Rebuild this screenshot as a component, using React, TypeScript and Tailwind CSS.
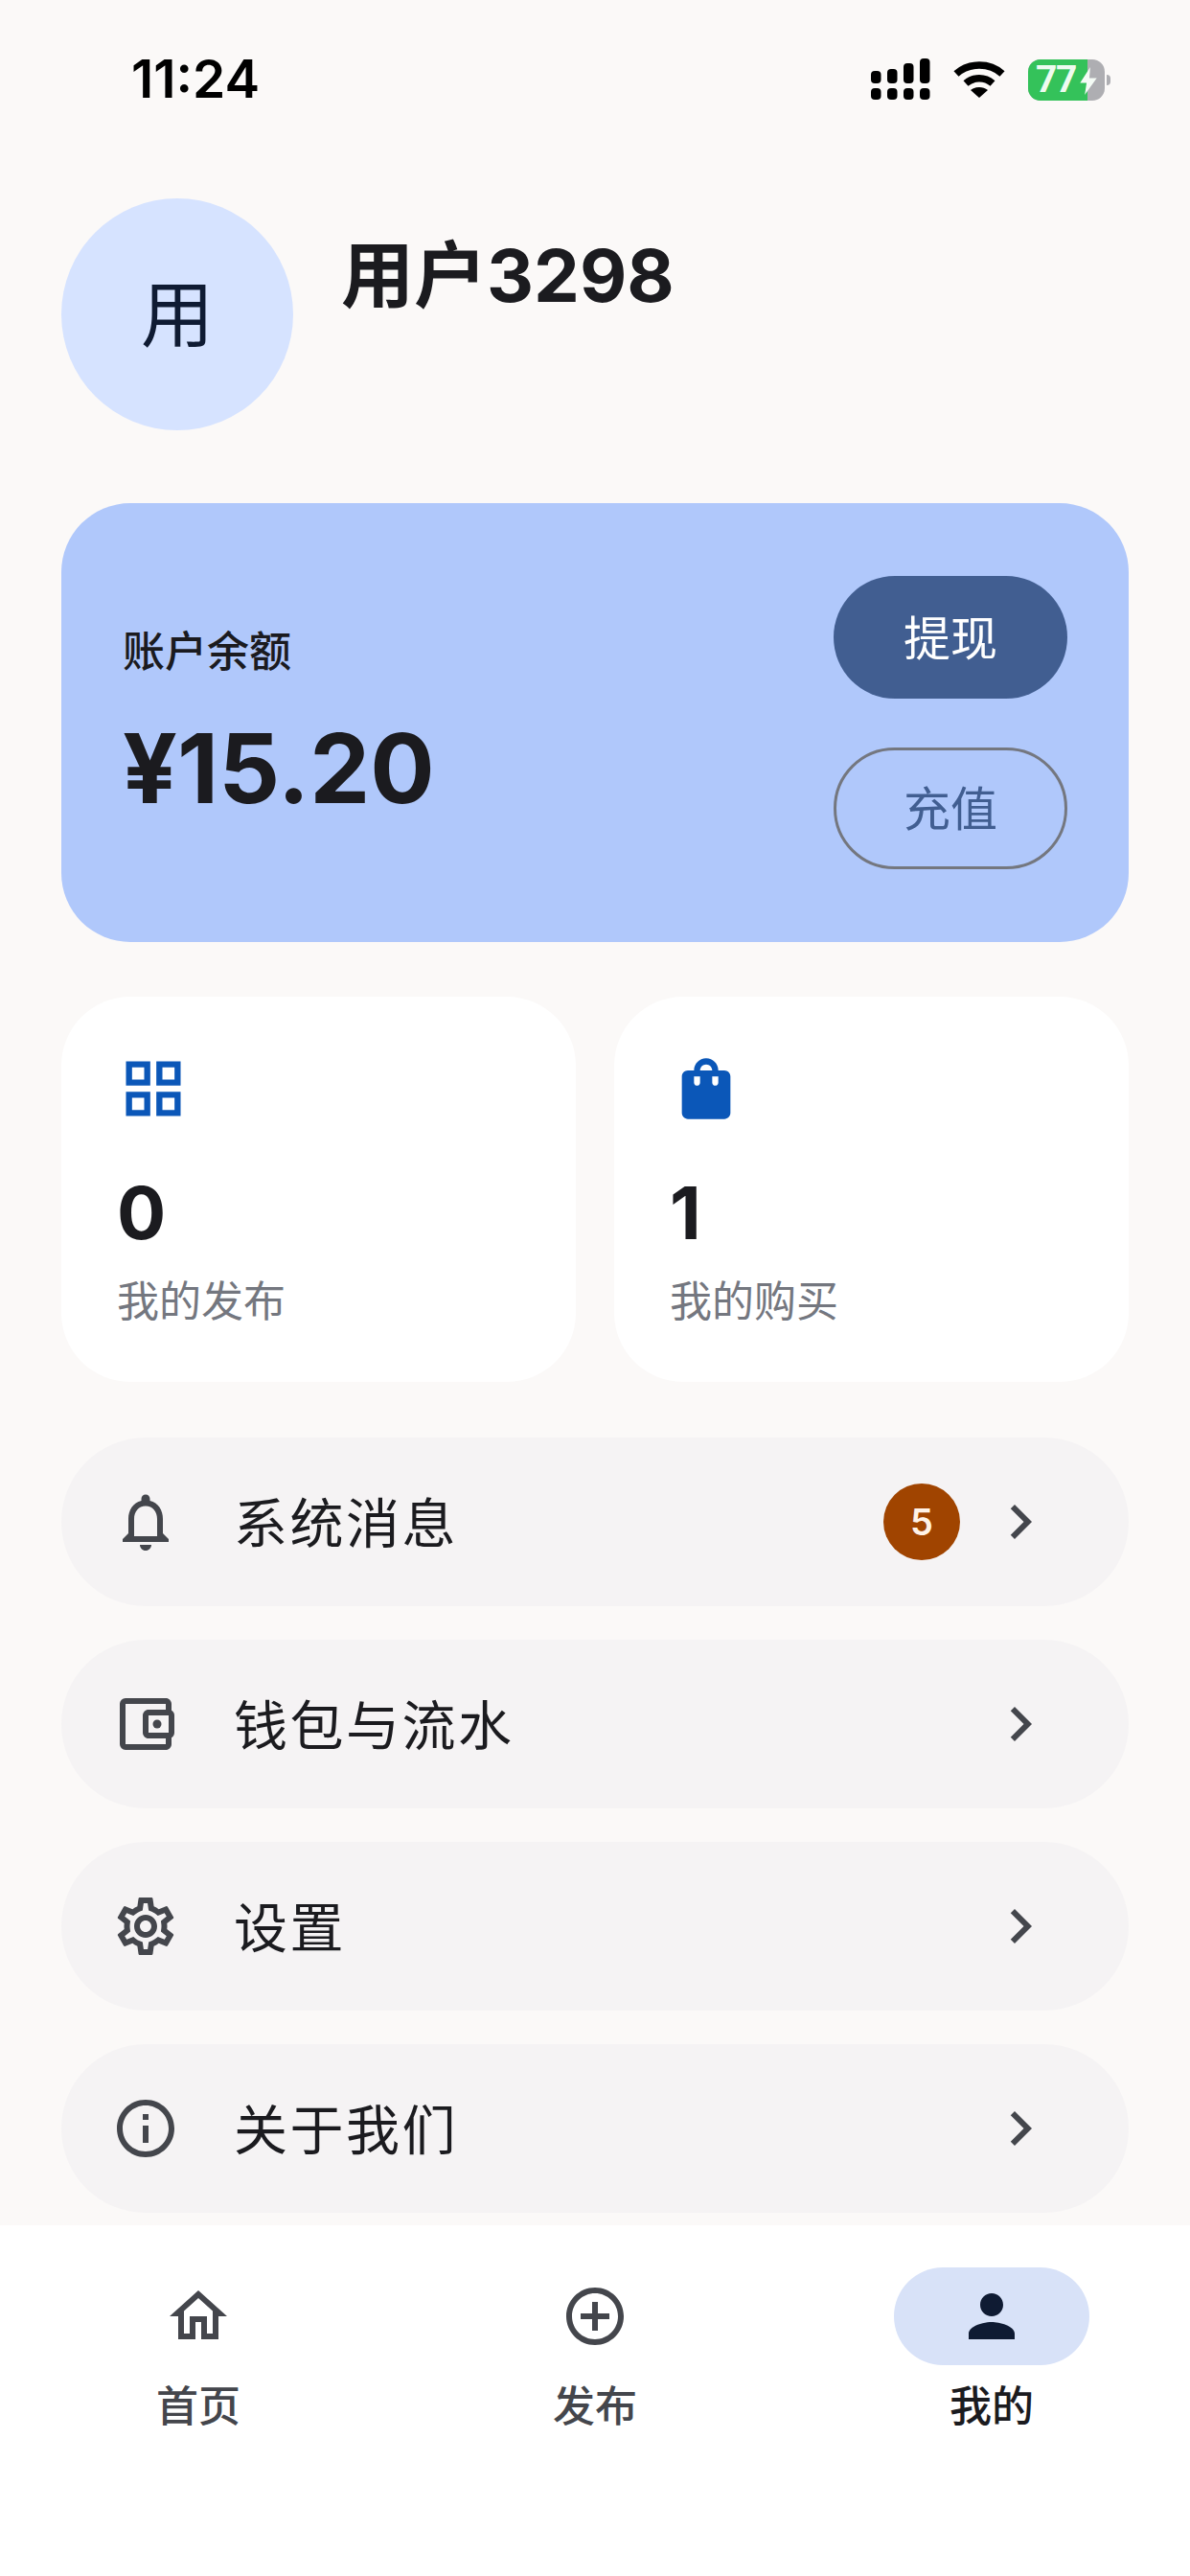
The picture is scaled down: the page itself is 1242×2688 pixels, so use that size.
import { type ReactNode } from "react"
import {
  MdAddCircleOutline,
  MdChevronRight,
  MdOutlineAccountBalanceWallet,
  MdOutlineGridView,
  MdOutlineHome,
  MdOutlineInfo,
  MdOutlineNotifications,
  MdOutlineSettings,
  MdPerson,
  MdShoppingBag,
} from "react-icons/md"

const menuItems = [
  { label: "系统消息", icon: <MdOutlineNotifications size={72} />, badge: "5" },
  { label: "钱包与流水", icon: <MdOutlineAccountBalanceWallet size={72} /> },
  { label: "设置", icon: <MdOutlineSettings size={72} /> },
  { label: "关于我们", icon: <MdOutlineInfo size={72} /> },
]

function SignalIcon() {
  return (
    <svg width="62" height="44" viewBox="0 0 62 44" fill="#000">
      <rect x="0" y="13" width="10.5" height="13" rx="4" />
      <rect x="17" y="11" width="10.5" height="15" rx="4" />
      <rect x="34" y="5" width="10.5" height="21" rx="4" />
      <rect x="51" y="0" width="10.5" height="26" rx="4" />
      <rect x="0" y="31" width="10.5" height="12" rx="4" />
      <rect x="17" y="31" width="10.5" height="12" rx="4" />
      <rect x="34" y="31" width="10.5" height="12" rx="4" />
      <rect x="51" y="31" width="10.5" height="12" rx="4" />
    </svg>
  )
}

function WifiIcon() {
  return (
    <svg width="54" height="40" viewBox="0 0 54 40" fill="none" stroke="#000" strokeWidth="7.5">
      <path d="M3 14 C16 2 38 2 51 14" />
      <path d="M13 24 C21 17 33 17 41 24" />
      <path d="M27 39 L18 31 C23 27 31 27 36 31 Z" fill="#000" stroke="none" />
    </svg>
  )
}

function BatteryIcon() {
  return (
    <div className="flex items-center gap-[2px]">
      <div className="relative flex h-[43px] w-[80px] rounded-[13px] bg-[#aeaeb2]">
        <div className="h-full w-[62px] rounded-l-[13px] bg-[#34c25a]" />
        <span className="absolute left-[8px] top-0 font-['Roboto',sans-serif] text-[39px] font-bold leading-[43px] tracking-[-1.5px] text-[#eefbf0]">
          77
        </span>
        <svg className="absolute left-[53px] top-[8px]" width="20" height="29" viewBox="0 0 20 30" fill="#f4fbf5">
          <path d="M12 0 L1 17 H8 L6 30 L19 12 H11 Z" />
        </svg>
      </div>
      <div className="h-[11px] w-[4px] rounded-r-full bg-[#aeaeb2]" />
    </div>
  )
}

function StatCard({ icon, value, label }: { icon: ReactNode; value: string; label: string }) {
  return (
    <div className="flex h-[402px] flex-col rounded-[72px] bg-white pl-[58px] pt-[58px]">
      <div className="h-[80px] text-[#0b57b8]">{icon}</div>
      <div className="mt-[42px] text-[76px] font-bold leading-[90px] text-[#1b1b1f]">{value}</div>
      <div className="mt-[18px] text-[44px] leading-[60px] text-[#74777f]">{label}</div>
    </div>
  )
}

function NavItem({ icon, label, active }: { icon: ReactNode; label: string; active?: boolean }) {
  return (
    <div className="flex w-[204px] flex-col items-center">
      <div
        className={
          active
            ? "flex h-[102px] w-[204px] items-center justify-center rounded-full bg-[#d8e2f8] text-[#0f1b33]"
            : "flex h-[102px] w-[204px] items-center justify-center text-[#44464c]"
        }
      >
        {icon}
      </div>
      <div
        className={
          active
            ? "mt-[15px] text-[44px] font-medium leading-[56px] text-[#1b1b1f]"
            : "mt-[15px] text-[44px] font-medium leading-[56px] text-[#44464c]"
        }
      >
        {label}
      </div>
    </div>
  )
}

export default function App() {
  return (
    <div className="flex h-[2688px] w-[1242px] flex-col overflow-hidden bg-[#fbf9f8] font-['Inter','Noto_Sans_CJK_SC',sans-serif]">
      {/* Status bar */}
      <div className="flex h-[207px] items-start justify-between pl-[137px] pr-[83px] pt-[50px]">
        <span className="text-[55px] font-semibold leading-[64px] text-black">11:24</span>
        <div className="flex items-center gap-[24px] pt-[11px]">
          <SignalIcon />
          <WifiIcon />
          <BatteryIcon />
        </div>
      </div>

      {/* Profile */}
      <div className="flex gap-[50px] px-[64px]">
        <div className="flex h-[242px] w-[242px] items-center justify-center rounded-full bg-[#d6e3ff] text-[76px] text-[#0f1b33]">
          用
        </div>
        <div className="mt-[30px] text-[76px] font-bold leading-[100px] text-[#1b1b1f]">用户3298</div>
      </div>

      {/* Balance */}
      <div className="mx-[64px] mt-[76px] flex h-[458px] items-center justify-between rounded-[72px] bg-[#b0c8fb] pl-[64px] pr-[64px]">
        <div className="pt-[3px]">
          <div className="text-[44px] font-medium leading-[60px] text-[#1b1b1f]">账户余额</div>
          <div className="mt-[32px] text-[100px] font-bold leading-[120px] text-[#1b1b1f]">¥15.20</div>
        </div>
        <div className="flex flex-col gap-[51px]">
          <div className="flex h-[128px] w-[244px] items-center justify-center rounded-full bg-[#415e91] pt-[3px] text-[49px] text-white">
            提现
          </div>
          <div className="flex h-[127px] w-[244px] items-center justify-center rounded-full border-[3px] border-[#74777f] pt-[3px] text-[49px] text-[#415e91]">
            充值
          </div>
        </div>
      </div>

      {/* Stats */}
      <div className="mx-[64px] mt-[57px] grid grid-cols-2 gap-[40px]">
        <StatCard icon={<MdOutlineGridView size={76} />} value="0" label="我的发布" />
        <StatCard icon={<MdShoppingBag size={76} />} value="1" label="我的购买" />
      </div>

      {/* Menu */}
      <div className="mx-[64px] mt-[58px] flex flex-col gap-[35px]">
        {menuItems.map((item) => (
          <div key={item.label} className="flex h-[176px] items-center rounded-full bg-[#f5f3f4] pl-[52px] pr-[77px]">
            <div className="w-[128px] text-[#44464c]">{item.icon}</div>
            <div className="flex-1 pt-[3px] text-[56px] tracking-[2.5px] text-[#1b1b1f]">{item.label}</div>
            {item.badge && (
              <div className="mr-[27px] flex h-[80px] w-[80px] items-center justify-center rounded-full bg-[#a04400] text-[38px] font-semibold text-[#fff3e8]">
                {item.badge}
              </div>
            )}
            <MdChevronRight size={72} className="text-[#44464c]" />
          </div>
        ))}
      </div>

      {/* Bottom nav */}
      <div className="mt-[13px] flex flex-1 justify-between bg-white pl-[105px] pr-[105px] pt-[44px]">
        <NavItem icon={<MdOutlineHome size={72} />} label="首页" />
        <NavItem icon={<MdAddCircleOutline size={72} />} label="发布" />
        <NavItem icon={<MdPerson size={72} />} label="我的" active />
      </div>
    </div>
  )
}
